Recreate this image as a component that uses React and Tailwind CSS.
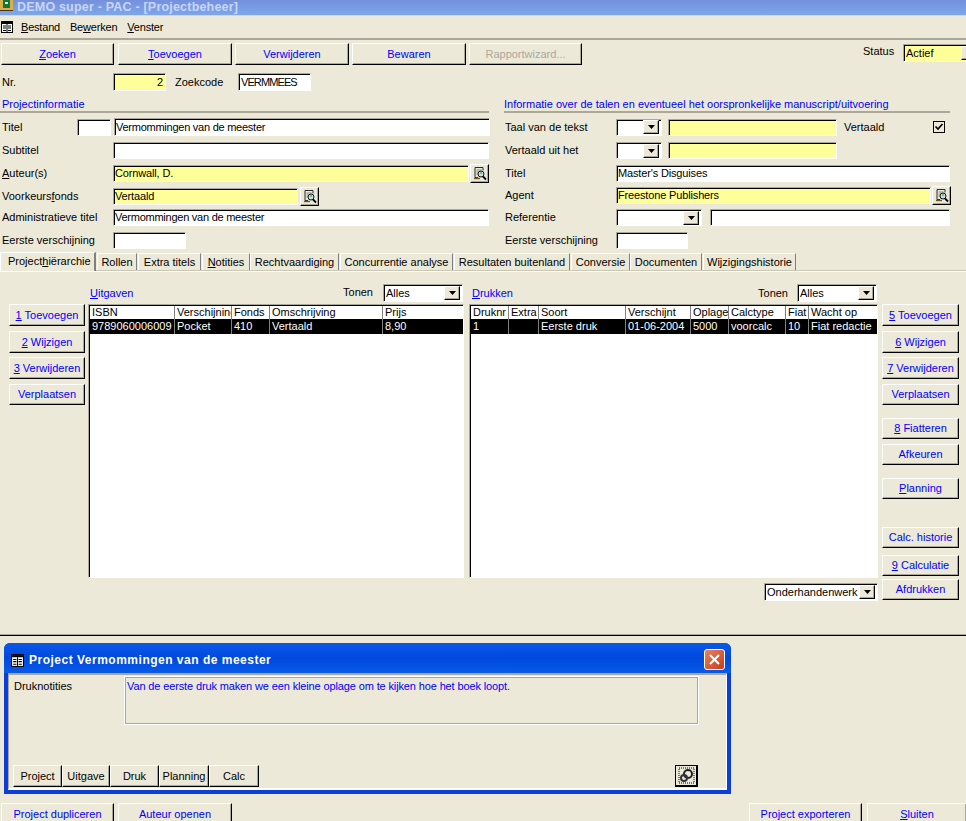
import React from "react";

const RAISED = "border border-t-white border-l-white border-r-black border-b-black shadow-[inset_-1px_-1px_0_#aca899]";
const SUNK = "border border-t-[#aca899] border-l-[#aca899] border-r-white border-b-white shadow-[inset_1px_1px_0_#000]";

function Btn({ children, className = "", color = "text-[#0000ff]" }) {
  return (
    <div className={`${RAISED} ${color} flex items-center justify-center shrink-0 bg-[#ece9d8] whitespace-nowrap ${className}`}>
      {children}
    </div>
  );
}

function Field({ children, className = "", bg = "bg-white", align = "justify-start", track = "tracking-[-0.15px]" }) {
  return (
    <div className={`${SUNK} ${bg} ${align} ${track} flex items-center pl-[1px] pr-[2px] overflow-hidden whitespace-nowrap shrink-0 ${className}`}>
      {children}
    </div>
  );
}

function Arrow({ className = "" }) {
  return (
    <div className={`${RAISED} flex items-center justify-center bg-[#ece9d8] shrink-0 ${className}`}>
      <svg width="7" height="4" viewBox="0 0 7 4"><path d="M0 0h7L3.5 4z" fill="#000" /></svg>
    </div>
  );
}

function Combo({ children, className = "", bg = "bg-white", arrow = "w-[16px] h-[14px]" }) {
  return (
    <div className={`${SUNK} ${bg} flex items-center justify-between pl-[2px] pr-[2px] overflow-hidden whitespace-nowrap shrink-0 ${className}`}>
      <span>{children}</span>
      <Arrow className={arrow} />
    </div>
  );
}

function Lookup({ className = "" }) {
  return (
    <Btn className={`w-[19px] h-[19px] ${className}`} color="text-black">
      <svg width="15" height="15" viewBox="0 0 15 15" fill="none">
        <path d="M3 1.5h8v3M3 1.5v10h3" stroke="#2a2a2a" />
        <path d="M2 12.5h6" stroke="#6b5a20" strokeWidth="1.4" />
        <path d="M4.5 4h5M4.5 6h2M4.5 8h1.5" stroke="#8a8a7a" />
        <circle cx="9" cy="8" r="3" fill="#bfe0e6" stroke="#111" />
        <path d="M8 7h2" stroke="#1f9a50" />
        <path d="M11 10.5l3 3" stroke="#000" strokeWidth="1.8" />
      </svg>
    </Btn>
  );
}

function Row({ className = "", children }) {
  return <div className={`flex items-center h-[17px] ${className}`}>{children}</div>;
}

function Label({ children, className = "w-[111px]" }) {
  return <div className={`shrink-0 whitespace-nowrap ${className}`}>{children}</div>;
}

function FormIcon({ size = 12, className = "" }) {
  return (
    <svg width={size} height={size} viewBox="0 0 12 12" className={`shrink-0 ${className}`}>
      <rect x="0.5" y="0.5" width="11" height="11" fill="#fff" stroke="#000" />
      <path d="M1 1h10v2H1z" fill="#000" />
      <path d="M2 5h3M2 7h3M2 9.5h3M7 5h3M7 7h3M7 9.5h3" stroke="#000" />
      <path d="M6 3v8" stroke="#000" />
    </svg>
  );
}

const TABS = [
  ["Rollen", "w-[40px] ml-[1px]"],
  ["Extra titels", "w-[63px] ml-[1px]"],
  [<><u>N</u>otities</>, "w-[48px] ml-[1px]"],
  ["Rechtvaardiging", "w-[89px]"],
  ["Concurrentie analyse", "w-[113px] ml-[1px]"],
  ["Resultaten buitenland", "w-[116px] ml-[1px]"],
  ["Conversie", "w-[59px] ml-[1px]"],
  ["Documenten", "w-[72px]"],
  ["Wijzigingshistorie", "w-[93px] ml-[1px]"],
];

const LEFT_COLS = [
  ["ISBN", "9789060006009", "w-[85px]"],
  ["Verschijning", "Pocket", "w-[57px]"],
  ["Fonds", "410", "w-[38px]"],
  ["Omschrijving", "Vertaald", "w-[113px]"],
  ["Prijs", "8,90", "flex-1"],
];

const RIGHT_COLS = [
  ["Druknr", "1", "w-[38px]"],
  ["Extra", "", "w-[30px]"],
  ["Soort", "Eerste druk", "w-[87px]"],
  ["Verschijnt", "01-06-2004", "w-[65px]"],
  ["Oplage", "5000", "w-[38px]"],
  ["Calctype", "voorcalc", "w-[57px]"],
  ["Fiat", "10", "w-[23px]"],
  ["Wacht op", "Fiat redactie", "flex-1"],
];

function List({ cols, className }) {
  return (
    <div className={`${SUNK} bg-white pt-[1px] pl-[1px] ${className}`}>
      <div className="flex h-[13px] items-center overflow-hidden">
        {cols.map(([h, , w], i) => (
          <div key={i} className={`${w} h-full pl-[2px] overflow-hidden whitespace-nowrap border-r border-[#808080] last:border-r-0 leading-[13px] shrink-0`}>
            {h}
          </div>
        ))}
      </div>
      <div className="flex h-[15px] items-center bg-black text-white overflow-hidden">
        {cols.map(([, v, w], i) => (
          <div key={i} className={`${w} h-full pl-[2px] overflow-hidden whitespace-nowrap border-r border-[#808080] last:border-r-0 leading-[15px] shrink-0`}>
            {v}
          </div>
        ))}
      </div>
    </div>
  );
}

export default function App() {
  return (
    <div className="w-[966px] h-[821px] overflow-hidden bg-[#ece9d8] text-black text-[11px] leading-[13px] [font-family:'Liberation_Sans',sans-serif]">
      {/* title bar */}
      <div className="h-[16px] flex items-start overflow-hidden bg-gradient-to-b from-[#7590dc] to-[#7ea6ea] border-b border-[#c8d8f4]">
        <svg width="13" height="11" viewBox="0 0 13 11" className="shrink-0">
          <rect x="0" y="0" width="13" height="10" fill="#d8b048" />
          <rect x="3" y="0" width="7" height="8" fill="#12763a" />
          <rect x="5" y="2" width="3" height="2" fill="#e8f0d8" />
          <path d="M0 10.5h13" stroke="#4a3410" />
        </svg>
        <div className="ml-[4px] font-bold text-[12.5px] leading-[14px] tracking-[0.2px] text-[#c9d6f3] whitespace-nowrap">
          DEMO super - PAC - [Projectbeheer]
        </div>
      </div>

      {/* menu */}
      <div className="h-[22px] flex items-center border-b-[2px] border-[#aca899] box-content">
        <FormIcon className="ml-[1px]" />
        <div className="ml-[8px] mt-[1px] tracking-[-0.2px]"><u>B</u>estand</div>
        <div className="ml-[10px] mt-[1px] tracking-[-0.2px]">Be<u>w</u>erken</div>
        <div className="ml-[10px] mt-[1px] tracking-[-0.2px]"><u>V</u>enster</div>
      </div>

      {/* toolbar */}
      <div className="flex items-start mt-[3px] pl-[1px]">
        <Btn className="w-[113px] h-[22px]"><span><u>Z</u>oeken</span></Btn>
        <Btn className="w-[114px] h-[22px] ml-[4px]"><span><u>T</u>oevoegen</span></Btn>
        <Btn className="w-[114px] h-[22px] ml-[3px]">Verwijderen</Btn>
        <Btn className="w-[114px] h-[22px] ml-[3px]">Bewaren</Btn>
        <Btn className="w-[113px] h-[22px] ml-[3px]" color="text-[#aca899]">Rapportwizard...</Btn>
        <div className="ml-[281px] mt-[2px] w-[40px] shrink-0">Status</div>
        <Combo className="w-[77px] h-[18px] mt-[1px] shrink-0" bg="bg-[#ffff99]">Actief</Combo>
      </div>

      {/* nr row */}
      <div className="flex items-center h-[18px] mt-[8px] pl-[2px]">
        <Label>Nr.</Label>
        <Field className="w-[53px] h-[18px]" bg="bg-[#ffff99]" align="justify-end">2</Field>
        <Label className="ml-[9px] w-[63px]">Zoekcode</Label>
        <Field className="w-[73px] h-[18px] pl-[2px]" track="tracking-[-0.9px]">VERMMEES</Field>
      </div>

      {/* info columns */}
      <div className="flex mt-[6px]">
        <div className="ml-[2px] w-[488px] shrink-0">
          <div className="h-[16px] pt-[1px] border-b-[2px] border-[#aca899] text-[#0000ff] -ml-[2px] pl-[2px] w-[489px] box-border">Projectinformatie</div>
          <Row className="mt-[5px] h-[18px]">
            <Label className="w-[75px]">Titel</Label>
            <Field className="w-[34px] h-[17px]" />
            <Field className="ml-[3px] w-[376px] h-[18px]" track="tracking-[-0.25px]">Vermommingen van de meester</Field>
          </Row>
          <Row className="mt-[6px]">
            <Label><span>Subtitel</span></Label>
            <Field className="w-[376px] h-[17px]" />
          </Row>
          <Row className="mt-[6px]">
            <Label><span><u>A</u>uteur(s)</span></Label>
            <Field className="w-[356px] h-[17px]" bg="bg-[#ffff99]">Cornwall, D.</Field>
            <Lookup className="ml-[1px]" />
          </Row>
          <Row className="mt-[6px]">
            <Label><span>Voorkeurs<u>f</u>onds</span></Label>
            <Field className="w-[185px] h-[17px]" bg="bg-[#ffff99]">Vertaald</Field>
            <Lookup className="ml-[2px]" />
          </Row>
          <Row className="mt-[4px]">
            <Label>Administratieve titel</Label>
            <Field className="w-[376px] h-[17px]" track="tracking-[-0.25px]">Vermommingen van de meester</Field>
          </Row>
          <Row className="mt-[6px]">
            <Label>Eerste verschijning</Label>
            <Field className="w-[73px] h-[17px]" />
          </Row>
        </div>

        <div className="ml-[14px] w-[462px] shrink-0">
          <div className="h-[16px] pt-[1px] border-b-[2px] border-[#aca899] text-[#0000ff] w-[446px] box-border">Informatie over de talen en eventueel het oorspronkelijke manuscript/uitvoering</div>
          <Row className="mt-[5px] h-[18px]">
            <Label className="w-[112px] pl-[1px]">Taal van de tekst</Label>
            <Combo className="w-[46px] h-[17px]">{""}</Combo>
            <Field className="ml-[6px] w-[169px] h-[17px]" bg="bg-[#ffff99]" />
            <Label className="ml-[7px] w-[89px]">Vertaald</Label>
            <svg width="12" height="12" viewBox="0 0 12 12" className="shrink-0">
              <rect x="0.5" y="0.5" width="11" height="11" fill="#ece9d8" stroke="#000" />
              <path d="M2.5 5.5l2.5 2.5 4.5-5" fill="none" stroke="#000" strokeWidth="1.7" />
            </svg>
          </Row>
          <Row className="mt-[6px]">
            <Label className="w-[112px] pl-[1px]">Vertaald uit het</Label>
            <Combo className="w-[46px] h-[17px]">{""}</Combo>
            <Field className="ml-[6px] w-[169px] h-[17px]" bg="bg-[#ffff99]" />
          </Row>
          <Row className="mt-[6px]">
            <Label className="w-[112px] pl-[1px]">Titel</Label>
            <Field className="w-[334px] h-[17px]">Master's Disguises</Field>
          </Row>
          <Row className="mt-[5px]">
            <Label className="w-[112px] pl-[1px]">Agent</Label>
            <Field className="w-[315px] h-[17px]" bg="bg-[#ffff99]">Freestone Publishers</Field>
            <Lookup className="ml-[1px]" />
          </Row>
          <Row className="mt-[5px]">
            <Label className="w-[112px] pl-[1px]">Referentie</Label>
            <Combo className="w-[86px] h-[17px]">{""}</Combo>
            <Field className="ml-[8px] w-[240px] h-[17px]" />
          </Row>
          <Row className="mt-[6px]">
            <Label className="w-[112px] pl-[1px]">Eerste verschijning</Label>
            <Field className="w-[72px] h-[17px]" />
          </Row>
        </div>
      </div>

      {/* tabs */}
      <div className="flex items-end h-[19px] mt-[3px] border-b border-[#c9c6b4] shadow-[0_1px_0_#fff]">
        <div className="w-[96px] h-[19px] -mb-px pt-[2px] pl-[7px] bg-[#ece9d8] border-t border-l border-white border-r-[2px] border-r-[#808080] whitespace-nowrap relative">
          Project<u>h</u>iërarchie
        </div>
        <div className="flex">
          {TABS.map(([t, w], i) => (
            <div key={i} className={`${w} h-[17px] flex items-center justify-center whitespace-nowrap border-t border-l border-white border-r border-r-[#808080] shrink-0`}>
              {t}
            </div>
          ))}
        </div>
      </div>

      {/* tab panel */}
      <div className="flex h-[363px]">
        <div className="ml-[9px] w-[76px] pt-[33px] shrink-0 flex flex-col">
          <Btn className="w-[76px] h-[22px]"><span><u>1</u> Toevoegen</span></Btn>
          <Btn className="w-[76px] h-[22px] mt-[5px]"><span><u>2</u> Wijzigen</span></Btn>
          <Btn className="w-[76px] h-[22px] mt-[4px]"><span><u>3</u> Verwijderen</span></Btn>
          <Btn className="w-[76px] h-[21px] mt-[5px]">Verplaatsen</Btn>
        </div>

        <div className="ml-[3px] w-[376px] shrink-0">
          <div className="h-[33px] flex items-end pb-[3px] pl-[2px]">
            <div className="text-[#0000ff] mb-[1px]"><u>U</u>itgaven</div>
            <div className="ml-auto mr-[10px] mb-[2px]">Tonen</div>
            <Combo className="w-[80px] h-[18px] mr-[1px] mb-[-1px]">Alles</Combo>
          </div>
          <List cols={LEFT_COLS} className="w-[376px] h-[274px]" />
        </div>

        <div className="ml-[5px] w-[409px] shrink-0">
          <div className="h-[33px] flex items-end pb-[3px] pl-[3px]">
            <div className="text-[#0000ff] mb-[1px]"><u>D</u>rukken</div>
            <div className="ml-auto mr-[9px] mb-[1px]">Tonen</div>
            <Combo className="w-[80px] h-[18px] mr-[1px] mb-[-1px]">Alles</Combo>
          </div>
          <List cols={RIGHT_COLS} className="w-[409px] h-[274px]" />
          <div className="flex justify-end mt-[5px]">
            <Combo className="w-[114px] h-[18px]">Onderhandenwerk</Combo>
          </div>
        </div>

        <div className="ml-[4px] w-[77px] pt-[33px] shrink-0 flex flex-col">
          <Btn className="w-[77px] h-[22px]"><span><u>5</u> Toevoegen</span></Btn>
          <Btn className="w-[77px] h-[22px] mt-[5px]"><span><u>6</u> Wijzigen</span></Btn>
          <Btn className="w-[77px] h-[22px] mt-[4px]"><span><u>7</u> Verwijderen</span></Btn>
          <Btn className="w-[77px] h-[21px] mt-[5px]">Verplaatsen</Btn>
          <Btn className="w-[77px] h-[21px] mt-[13px]"><span><u>8</u> Fiatteren</span></Btn>
          <Btn className="w-[77px] h-[21px] mt-[5px]">Afkeuren</Btn>
          <Btn className="w-[77px] h-[21px] mt-[13px]"><span><u>P</u>lanning</span></Btn>
          <Btn className="w-[77px] h-[21px] mt-[28px]">Calc. historie</Btn>
          <Btn className="w-[77px] h-[21px] mt-[7px]"><span><u>9</u> Calculatie</span></Btn>
          <Btn className="w-[77px] h-[21px] mt-[3px]">Afdrukken</Btn>
        </div>
      </div>

      {/* separator */}
      <div className="h-[2px] bg-black border-t border-[#aca899]" />

      {/* dialog */}
      <div className="ml-[4px] mt-[7px] w-[727px] h-[151px] rounded-t-[6px] flex flex-col bg-[#0b3fd6] px-[4px] pb-[4px]">
        <div className="h-[30px] -mx-[4px] px-[6px] rounded-t-[6px] flex items-center bg-gradient-to-b from-[#0a5ae8] via-[#0048dc] to-[#0a5ae8] shrink-0">
          <FormIcon size={13} className="ml-[1px] mt-[4px]" />
          <div className="ml-[5px] mt-[5px] font-bold text-[12px] tracking-[0.5px] text-white whitespace-nowrap">Project Vermommingen van de meester</div>
          <div className="ml-auto mt-[3px] w-[21px] h-[21px] rounded-[3px] border border-white bg-gradient-to-br from-[#e8805f] to-[#c43d18] flex items-center justify-center">
            <svg width="11" height="11" viewBox="0 0 11 11"><path d="M1 1l9 9M10 1l-9 9" stroke="#fff" strokeWidth="2" /></svg>
          </div>
        </div>
        <div className="flex-1 bg-[#ece9d8] border-t-[2px] border-l border-[#aca899] border-r border-r-white border-b-[2px] border-b-white flex flex-col">
          <div className="flex mt-[2px]">
            <div className="w-[116px] pl-[5px] pt-[3px] shrink-0">Druknotities</div>
            <div className="w-[573px] h-[47px] border border-[#aca899] outline outline-white text-[#0000ff] pl-[1px] pt-[2px] whitespace-nowrap tracking-[-0.13px]">
              Van de eerste druk maken we een kleine oplage om te kijken hoe het boek loopt.
            </div>
          </div>
          <div className="flex mt-auto pl-[4px] pb-[1px]">
            <Btn className="w-[49px] h-[22px]" color="text-black">Project</Btn>
            <Btn className="w-[48px] h-[22px]" color="text-black">Uitgave</Btn>
            <Btn className="w-[49px] h-[22px]" color="text-black">Druk</Btn>
            <Btn className="w-[50px] h-[22px]" color="text-black">Planning</Btn>
            <Btn className="w-[50px] h-[22px]" color="text-black">Calc</Btn>
            <div className="ml-[416px] w-[23px] h-[22px] border-[2px] border-black border-t border-l bg-[#ece9d8] flex items-center justify-center shrink-0">
              <svg width="17" height="17" viewBox="0 0 17 17" fill="none">
                <rect x="1" y="1" width="15" height="15" stroke="#000" strokeDasharray="1 1" />
                <circle cx="10" cy="7" r="4" stroke="#222" strokeWidth="2" />
                <circle cx="6" cy="11" r="3" stroke="#333" strokeWidth="2" />
              </svg>
            </div>
          </div>
        </div>
      </div>

      {/* bottom buttons */}
      <div className="flex mt-[9px] pl-[1px]">
        <Btn className="w-[113px] h-[22px]">Project dupliceren</Btn>
        <Btn className="w-[114px] h-[22px] ml-[4px]">Auteur openen</Btn>
        <Btn className="w-[113px] h-[22px] ml-[517px]">Project exporteren</Btn>
        <Btn className="w-[100px] h-[22px] ml-[5px]"><span><u>S</u>luiten</span></Btn>
      </div>
    </div>
  );
}
